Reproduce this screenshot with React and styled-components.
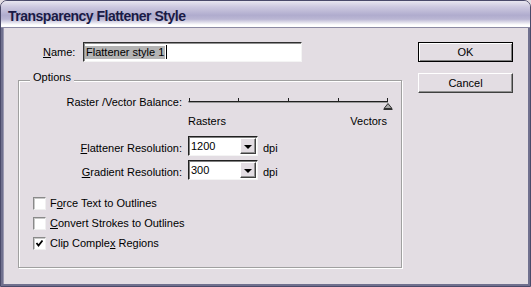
import React from "react";
import styled, { createGlobalStyle } from "styled-components";

const face = "#e3dde3";

const GlobalStyle = createGlobalStyle`
  html, body {
    margin: 0;
    padding: 0;
    background: ${face};
  }
  body {
    font-family: "Liberation Sans", Arial, sans-serif;
    font-size: 11px;
    line-height: 13px;
    color: #000;
  }
`;

const Window = styled.div`
  width: 531px;
  height: 287px;
  box-sizing: border-box;
  display: flex;
  flex-direction: column;
  border: 1px solid #4a4a6a;
  border-radius: 7px 7px 0 0;
  overflow: hidden;
  background: ${face};
`;

const TitleBar = styled.div`
  height: 27px;
  box-sizing: border-box;
  flex-shrink: 0;
  padding: 7px 0 0 7px;
  background: linear-gradient(
    to bottom,
    #e8e6f0 0%,
    #cdc9e0 22%,
    #b0acce 55%,
    #bab6d4 70%,
    #ffffff 92%
  );
  border-bottom: 1px solid #8c8aa4;
  font-size: 14px;
  line-height: 16px;
  font-weight: bold;
  letter-spacing: -0.5px;
  color: #1a1a46;
`;

const Body = styled.div`
  flex: 1;
  display: flex;
  gap: 16px;
  padding: 14px 15px 16px 15px;
  border: 2px solid #70708e;
  border-top: none;
  box-shadow: inset 1px 0 0 #9a98b0;
`;

const LeftCol = styled.div`
  width: 384px;
  display: flex;
  flex-direction: column;
`;

const RightCol = styled.div`
  width: 95px;
  display: flex;
  flex-direction: column;
  gap: 11px;
`;

const NameRow = styled.div`
  display: flex;
  align-items: center;
  height: 20px;
  margin-left: 25px;
`;

const NameLabel = styled.span`
  width: 40px;
`;

const TextField = styled.div`
  width: 219px;
  height: 20px;
  box-sizing: border-box;
  display: flex;
  align-items: center;
  padding-left: 1px;
  background: #fff;
  border: 1px solid;
  border-color: #303030 #f4f4f4 #f4f4f4 #303030;
  box-shadow: inset 1px 1px 0 #909090;
`;

const Selected = styled.span`
  background: #b4b4b4;
  padding: 0 1px;
`;

const Caret = styled.span`
  display: inline-block;
  width: 1px;
  height: 14px;
  margin-left: 1px;
  background: #000;
`;

const U = styled.span`
  text-decoration: underline;
  text-underline-offset: 1px;
`;

const Group = styled.div`
  flex: 1;
  margin-top: 18px;
  display: flex;
  flex-direction: column;
  padding-left: 14px;
  border: 1px solid #a0a0a0;
  box-shadow: 1px 1px 0 #fff, inset 1px 1px 0 #fff;
`;

const Legend = styled.span`
  align-self: flex-start;
  margin: -10px 0 0 -3px;
  padding: 0 3px;
  background: ${face};
`;

const Row = styled.div`
  display: flex;
  align-items: flex-start;
  gap: 6px;
  margin-top: ${(p) => p.$top}px;
`;

const RowLabel = styled.span`
  width: 149px;
  text-align: right;
  padding-top: ${(p) => p.$pad || 0}px;
`;

const Unit = styled.span`
  padding-top: 6px;
  margin-left: -1px;
`;

const SliderArt = styled.svg`
  display: block;
  overflow: visible;
`;

const ScaleLabels = styled.div`
  display: flex;
  justify-content: space-between;
  width: 199px;
  margin: 6px 0 0 155px;
`;

const Combo = styled.div`
  width: 70px;
  height: 20px;
  box-sizing: border-box;
  display: flex;
  background: #fff;
  border: 1px solid;
  border-color: #202020 #f4f4f4 #f4f4f4 #202020;
  box-shadow: inset 1px 1px 0 #808080;
  padding: 1px;
`;

const ComboText = styled.span`
  flex: 1;
  padding: 2px 0 0 1px;
`;

const DropButton = styled.div`
  width: 16px;
  box-sizing: border-box;
  display: flex;
  align-items: center;
  justify-content: center;
  background: ${face};
  border: 1px solid;
  border-color: #fff #404040 #404040 #fff;
  box-shadow: inset -1px -1px 0 #909090;
`;

const Arrow = styled.span`
  width: 0;
  height: 0;
  border-left: 4px solid transparent;
  border-right: 4px solid transparent;
  border-top: 4px solid #000;
  margin-top: 1px;
`;

const Checks = styled.div`
  display: flex;
  flex-direction: column;
  gap: 7px;
  margin-top: 17px;
`;

const CheckRow = styled.div`
  display: flex;
  align-items: center;
  gap: 4px;
`;

const Box = styled.span`
  width: 13px;
  height: 13px;
  box-sizing: border-box;
  display: flex;
  align-items: center;
  justify-content: center;
  background: #fff;
  border: 1px solid;
  border-color: #8a8a8a #f0f0f0 #f0f0f0 #8a8a8a;
  box-shadow: inset 1px 1px 0 #c8c8c8;
`;

const Button = styled.div`
  height: 20px;
  box-sizing: border-box;
  display: flex;
  align-items: center;
  justify-content: center;
  background: ${face};
  border: 1px solid;
  border-color: ${(p) => (p.$default ? "#000" : "#fff #404040 #404040 #fff")};
  box-shadow: ${(p) =>
    p.$default
      ? "inset 1px 1px 0 #fff, inset -1px -1px 0 #808080"
      : "inset -1px -1px 0 #909090"};
`;

function Slider() {
  const ticks = [1.5, 50.5, 100.5, 150.5, 199.5];
  return (
    <SliderArt width="204" height="13" viewBox="0 0 204 13">
      <line x1="0.5" y1="5.5" x2="200" y2="5.5" stroke="#202020" />
      <line x1="0.5" y1="6.5" x2="200" y2="6.5" stroke="#9a9a9a" />
      {ticks.map((x) => (
        <line key={x} x1={x} y1="2" x2={x} y2="6" stroke="#202020" />
      ))}
      <polygon
        points="200,7.5 196,12.5 204,12.5"
        fill="#a8a8a8"
        stroke="#303030"
        strokeWidth="1"
      />
      <line x1="195.5" y1="13.5" x2="204.5" y2="13.5" stroke="#303030" />
    </SliderArt>
  );
}

function Check({ checked, children }) {
  return (
    <CheckRow>
      <Box>
        {checked && (
          <svg width="9" height="9" viewBox="0 0 9 9">
            <polyline
              points="1.5,4 3.5,6.5 7.5,1.5"
              fill="none"
              stroke="#000"
              strokeWidth="1.8"
            />
          </svg>
        )}
      </Box>
      <span>{children}</span>
    </CheckRow>
  );
}

function ComboBox({ value }) {
  return (
    <Combo>
      <ComboText>{value}</ComboText>
      <DropButton>
        <Arrow />
      </DropButton>
    </Combo>
  );
}

export default function App() {
  return (
    <>
      <GlobalStyle />
      <Window>
        <TitleBar>Transparency Flattener Style</TitleBar>
        <Body>
          <LeftCol>
            <NameRow>
              <NameLabel>
                <U>N</U>ame:
              </NameLabel>
              <TextField>
                <Selected>Flattener style 1</Selected>
                <Caret />
              </TextField>
            </NameRow>
            <Group>
              <Legend>Options</Legend>
              <Row $top={12}>
                <RowLabel>Raster /Vector Balance:</RowLabel>
                <Slider />
              </Row>
              <ScaleLabels>
                <span>Rasters</span>
                <span>Vectors</span>
              </ScaleLabels>
              <Row $top={8}>
                <RowLabel $pad={6}>
                  <U>F</U>lattener Resolution:
                </RowLabel>
                <ComboBox value="1200" />
                <Unit>dpi</Unit>
              </Row>
              <Row $top={4}>
                <RowLabel $pad={6}>
                  <U>G</U>radient Resolution:
                </RowLabel>
                <ComboBox value="300" />
                <Unit>dpi</Unit>
              </Row>
              <Checks>
                <Check>
                  F<U>o</U>rce Text to Outlines
                </Check>
                <Check>
                  <U>C</U>onvert Strokes to Outlines
                </Check>
                <Check checked>
                  Clip Comple<U>x</U> Regions
                </Check>
              </Checks>
            </Group>
          </LeftCol>
          <RightCol>
            <Button $default>OK</Button>
            <Button>Cancel</Button>
          </RightCol>
        </Body>
      </Window>
    </>
  );
}
